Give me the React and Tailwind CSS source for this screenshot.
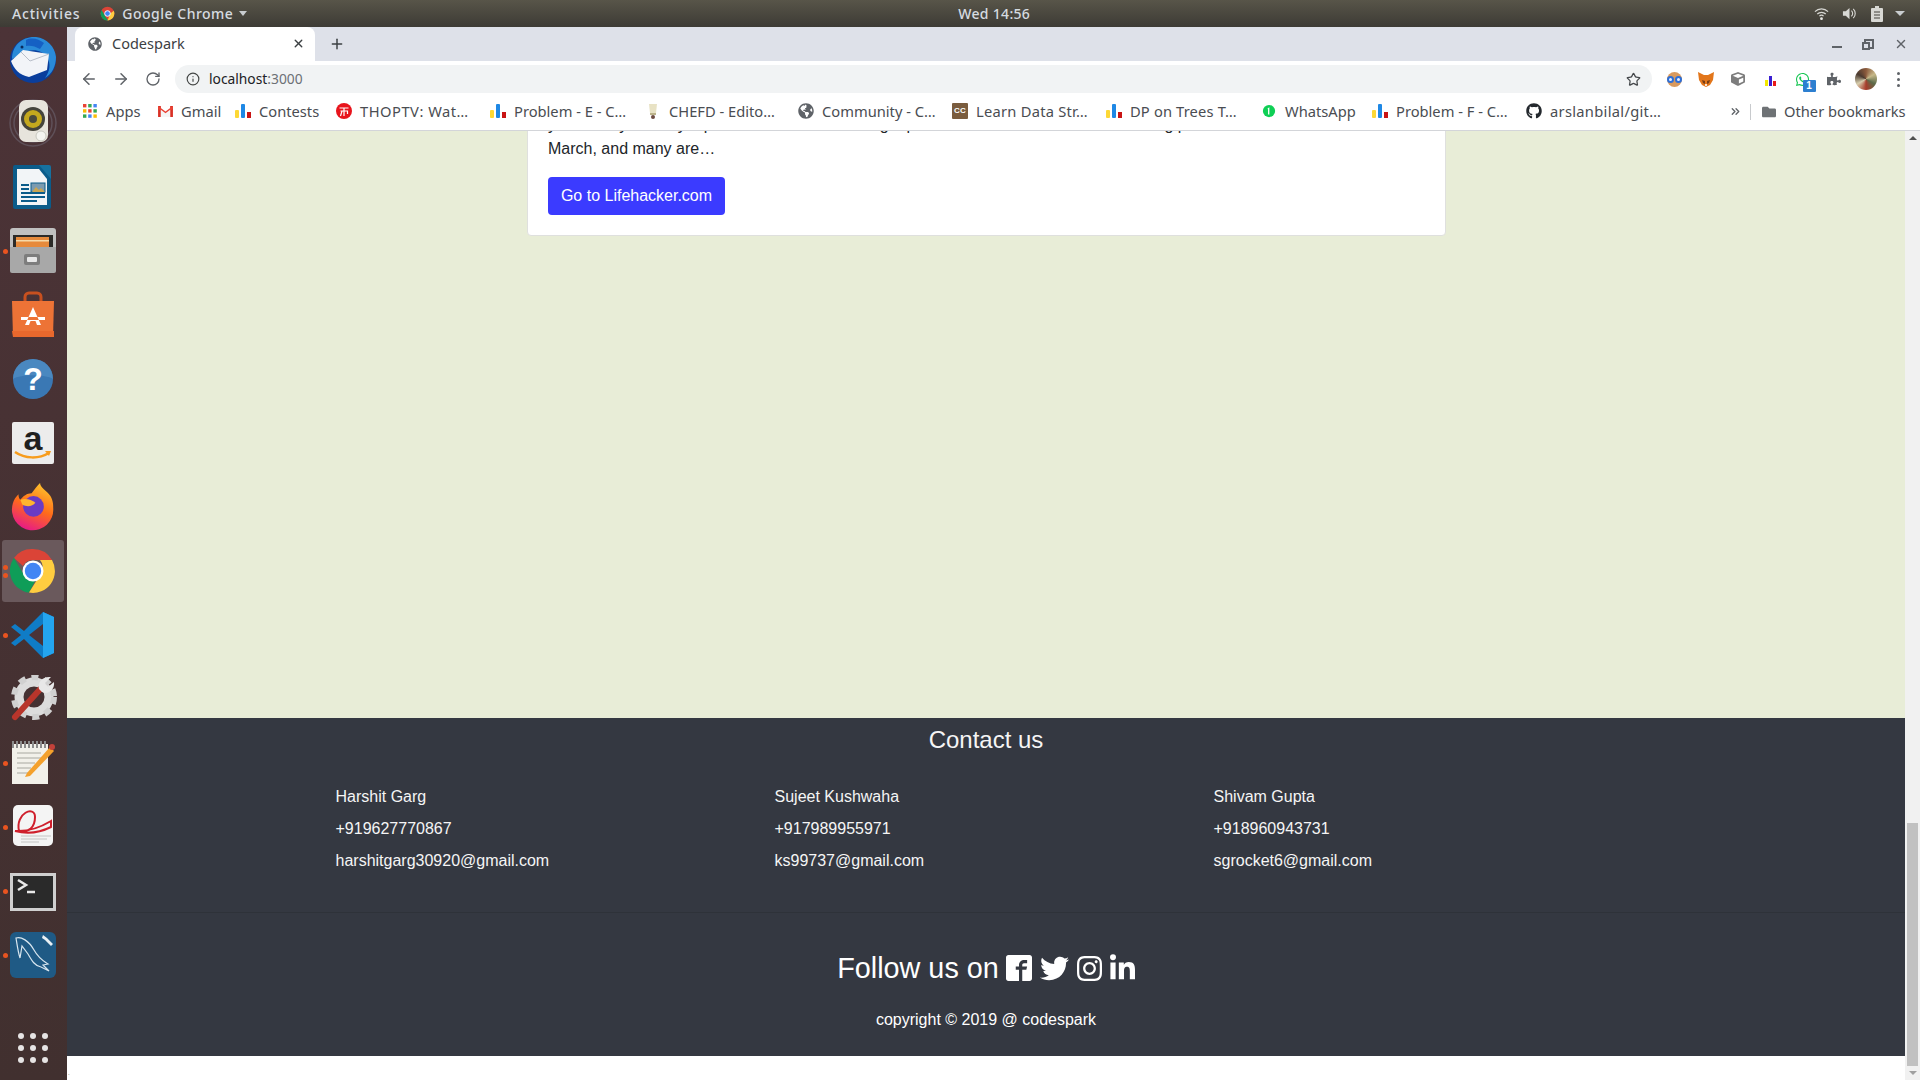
import React from "react";
import { ArrowLeft, ArrowRight, RotateCw, Info, Star, Plus, X, ChevronsRight } from "lucide-react";
import { FaGlobeAmericas, FaGithub, FaFolder, FaPuzzlePiece, FaTwitter, FaInstagram, FaLinkedinIn, FaWhatsapp, FaCube } from "react-icons/fa";
import { ImFacebook2 } from "react-icons/im";

const Bars = ({ className = "w-4 h-4" }) => (
    <svg viewBox="0 0 16 16" className={className}>
        <rect x="0" y="7" width="4" height="8" rx="1" fill="#fdd835" />
        <rect x="6" y="1" width="4" height="14" rx="1" fill="#1e88e5" />
        <rect x="12" y="9" width="4" height="6" fill="#c91414" />
    </svg>
);

const AppsGrid = () => (
    <svg viewBox="0 0 14 14" className="w-[14px] h-[14px]">
        {[
            ["#ea4335", "#34a853", "#4285f4"],
            ["#fbbc05", "#ea4335", "#34a853"],
            ["#34a853", "#4285f4", "#fbbc05"],
        ].map((row, r) =>
            row.map((c, i) => <rect key={`${r}-${i}`} x={i * 5.2} y={r * 5.2} width="3.4" height="3.4" fill={c} />)
        )}
    </svg>
);

const Gmail = () => (
    <svg viewBox="0 0 16 14" className="w-[15px] h-[13px]">
        <path d="M0 1h3v12H0zM13 1h3v12h-3z" fill="#d93025" />
        <path d="M0 1l8 6 8-6v3L8 10 0 4z" fill="#ea4335" />
        <path d="M3 5l5 4 5-4v8H3z" fill="#f5f5f5" />
    </svg>
);

const Thop = () => (
    <svg viewBox="0 0 16 16" className="w-4 h-4">
        <circle cx="8" cy="8" r="8" fill="#e8141c" />
        <path d="M3.5 5h9M8 5v3M4.5 8h7v3M6 8l-1.5 5M8 8v5" stroke="#fff" strokeWidth="1.2" fill="none" />
    </svg>
);

const Chef = () => (
    <svg viewBox="0 0 16 16" className="w-4 h-4">
        <path d="M4 1h8l-1 9H5z" fill="#e8e2c4" />
        <path d="M5 10h6v2H5z" fill="#bcb38a" />
        <circle cx="8" cy="14" r="2" fill="#6d4c41" />
    </svg>
);

const CC = () => (
    <div className="w-4 h-4 bg-[#7a5c3e] rounded-[1px] flex items-center justify-center text-[8px] leading-none font-bold text-white font-['Liberation_Sans']">
        CC
    </div>
);

const Wa = () => (
    <svg viewBox="0 0 16 16" className="w-[14px] h-[14px]">
        <circle cx="8" cy="8" r="7" fill="#0fcf55" />
        <path d="M6.4 5l2-1.2V12H6.9V5.6L6.4 6z" fill="#fff" />
    </svg>
);

const bookmarks = [
    { label: "Apps", icon: <AppsGrid />, w: "w-[75px]" },
    { label: "Gmail", icon: <Gmail />, w: "w-[78px]" },
    { label: "Contests", icon: <Bars />, w: "w-[101px]" },
    { label: "THOPTV: Wat…", icon: <Thop />, w: "w-[154px] tracking-[0.5px]" },
    { label: "Problem - E - C…", icon: <Bars />, w: "w-[155px]" },
    { label: "CHEFD - Edito…", icon: <Chef />, w: "w-[153px]" },
    { label: "Community - C…", icon: <FaGlobeAmericas className="w-4 h-4 text-[#5f6368]" />, w: "w-[154px]" },
    { label: "Learn Data Str…", icon: <CC />, w: "w-[154px] tracking-[0.25px]" },
    { label: "DP on Trees T…", icon: <Bars />, w: "w-[155px] tracking-[0.15px]" },
    { label: "WhatsApp", icon: <Wa />, w: "w-[111px]" },
    { label: "Problem - F - C…", icon: <Bars />, w: "w-[154px]" },
    { label: "arslanbilal/git…", icon: <FaGithub className="w-4 h-4 text-[#24292e]" />, w: "w-[150px] tracking-[0.3px]" },
];

const Thunderbird = () => (
    <svg viewBox="0 0 48 48" className="w-12 h-12">
        <circle cx="24" cy="25" r="23" fill="#0a3e9c" />
        <path d="M3 24C3 10 14 1 27 2c11 1 19 10 20 20 0 9-4 17-11 21 5-7 6-14 2-21-4-6-12-8-19-6z" fill="#2a8ad8" />
        <path d="M17 5c6-3 13-1 18 3l-4 6c-5-3-10-4-14-3z" fill="#1560c4" />
        <path d="M2 26l12-11 26 4-2 16-18 7C10 40 5 34 2 26z" fill="#f2f4f8" />
        <path d="M12 17l9 9 19-7" fill="none" stroke="#b8bec9" strokeWidth="1" />
        <circle cx="13" cy="12" r="1.5" fill="#0a2a5c" />
    </svg>
);

const Speaker = () => (
    <svg viewBox="0 0 48 48" className="w-12 h-12">
        <circle cx="24" cy="24" r="23" fill="none" stroke="#6d6470" strokeWidth="1.5" opacity=".6" />
        <circle cx="24" cy="24" r="19" fill="none" stroke="#6d6470" strokeWidth="1.5" opacity=".6" />
        <rect x="10" y="1" width="29" height="42" rx="7" fill="#e7e4dc" />
        <circle cx="24" cy="20" r="12" fill="#45443c" />
        <circle cx="24" cy="20" r="9" fill="#c4a81e" />
        <circle cx="24" cy="20" r="4" fill="#4a4a3c" />
        <circle cx="32" cy="37" r="5" fill="#f4f4f0" stroke="#c8c8c0" />
    </svg>
);

const Writer = () => (
    <svg viewBox="0 0 48 48" className="w-12 h-12">
        <path d="M6 2h28l8 8v34a2 2 0 0 1-2 2H6a2 2 0 0 1-2-2V4a2 2 0 0 1 2-2z" fill="#0b5c8a" />
        <path d="M30 2h10a2 2 0 0 1 2 2v12z" fill="#16719f" />
        <path d="M8 6h22l8 10v26H8z" fill="#f2f5f7" />
        <rect x="22" y="20" width="14" height="9" fill="#7b9bb0" stroke="#0b5c8a" />
        <path d="M23 29l4-5 3 3 2-2 4 4z" fill="#c9a552" />
        <path d="M12 22h8M12 26h8M12 30h24M12 34h24M12 38h16" stroke="#0b5c8a" strokeWidth="2" />
    </svg>
);

const Files = () => (
    <svg viewBox="0 0 48 48" className="w-12 h-12">
        <rect x="1" y="1" width="46" height="44" rx="3" fill="#c0c0c0" />
        <rect x="4" y="8" width="40" height="15" fill="#2c2a28" />
        <rect x="7" y="10" width="33" height="10" fill="#e68a3c" />
        <rect x="7" y="13" width="33" height="1.5" fill="#f6d9a8" />
        <path d="M1 20h46v24a2 2 0 0 1-2 2H3a2 2 0 0 1-2-2z" fill="#a8a8a8" />
        <rect x="15" y="27" width="16" height="11" rx="2" fill="#7d7d7d" />
        <rect x="18" y="30" width="10" height="5" rx="1" fill="#e8e8e8" />
    </svg>
);

const Store = () => (
    <svg viewBox="0 0 48 48" className="w-12 h-12">
        <path d="M16 14V6a4 4 0 0 1 4-4h8a4 4 0 0 1 4 4v8" fill="none" stroke="#c8501f" strokeWidth="3" />
        <path d="M3 10h42l-1 36H4z" fill="#ed7336" />
        <path d="M3 40h42v6H4z" fill="#e8682d" />
        <path d="M24 16l-8 18h4l1.5-4h5l1.5 4h4zM12 26h24v3H12z" fill="#fff" />
    </svg>
);

const Help = () => (
    <svg viewBox="0 0 48 48" className="w-12 h-12">
        <circle cx="24" cy="24" r="20" fill="#3a78b4" />
        <path d="M4 24a20 20 0 0 1 40 0c-8-5-32-5-40 0z" fill="#5592c8" opacity=".6" />
        <text x="24" y="35" textAnchor="middle" fontSize="32" fontWeight="700" fill="#fff" fontFamily="Liberation Sans">?</text>
    </svg>
);

const Amazon = () => (
    <svg viewBox="0 0 48 48" className="w-12 h-12">
        <rect x="3" y="3" width="42" height="42" rx="2" fill="#ececec" />
        <text x="24" y="31" textAnchor="middle" fontSize="34" fontWeight="700" fill="#1f1f1f" fontFamily="Liberation Sans">a</text>
        <path d="M6 33c10 7 24 7 34 1" fill="none" stroke="#f79c1d" strokeWidth="2.5" />
        <path d="M36 32l6 0-2 5z" fill="#f79c1d" />
    </svg>
);

const Firefox = () => (
    <svg viewBox="0 0 48 48" className="w-12 h-12">
        <defs>
            <linearGradient id="ff" x1="0.7" y1="0" x2="0.3" y2="1">
                <stop offset="0" stopColor="#ffc32c" />
                <stop offset="0.5" stopColor="#ff6b1a" />
                <stop offset="1" stopColor="#e6168c" />
            </linearGradient>
        </defs>
        <g transform="translate(1 -1) scale(.94)">
            <path d="M32 1c0 5 7 8 11 14 3 5 3 10 3 13a22 22 0 1 1-43-5c1-4 3-7 6-10 0 3 1 5 2 6 3-4 7-7 12-7 3-4 6-8 9-11z" fill="url(#ff)" />
            <circle cx="25" cy="26" r="11" fill="#6a3bc4" />
            <path d="M11 19c6-2 12 0 16 3-3 4-9 5-14 2z" fill="#ffb52e" />
        </g>
    </svg>
);

const Chrome = () => (
    <svg viewBox="0 0 48 48" className="w-12 h-12">
        <path d="M24 2a22 22 0 0 1 19 11H24a11 11 0 0 0-10 6L5 11A22 22 0 0 1 24 2z" fill="#db4437" />
        <path d="M5 11l10 17a11 11 0 0 0 11 6l-6 11.6A22 22 0 0 1 5 11z" fill="#0f9d58" />
        <path d="M43 13a22 22 0 0 1-23 32.6L31 28a11 11 0 0 0 0-15z" fill="#ffcd40" />
        <circle cx="24" cy="24" r="10.5" fill="#fff" />
        <circle cx="24" cy="24" r="8.2" fill="#4285f4" />
    </svg>
);

const VSCode = () => (
    <svg viewBox="0 0 48 48" className="w-12 h-12">
        <path d="M34 1l11 5v36l-11 5-19-19-9 7-4-3 10-8L2 16l4-3 9 7z" fill="#0f7cc6" />
        <path d="M34 1l11 5v36l-11 5z" fill="#24a5ef" />
        <path d="M34 13L20 24l14 11z" fill="#4a3338" />
    </svg>
);

const Settings = () => (
    <svg viewBox="0 0 48 48" className="w-12 h-12">
        <g transform="translate(0 -2)">
            <circle cx="25" cy="24" r="15" fill="none" stroke="#dcdcdc" strokeWidth="9" />
            <circle cx="25" cy="24" r="20" fill="none" stroke="#d0d0d0" strokeWidth="6" strokeDasharray="7 6" />
            <path d="M6 44L34 13" stroke="#b8352b" strokeWidth="6" strokeLinecap="round" />
            <path d="M30 16c-2-7 4-13 12-12l-6 6 3 4 6-5c1 8-6 13-12 10z" fill="#e8e8e8" />
        </g>
    </svg>
);

const Notes = () => (
    <svg viewBox="0 0 48 48" className="w-12 h-12">
        <rect x="3" y="5" width="36" height="40" fill="#f2f1ea" />
        <path d="M4 2v7M8 2v7M12 2v7M16 2v7M20 2v7M24 2v7M28 2v7M32 2v7M36 2v7" stroke="#8c8c8c" strokeWidth="2" />
        <path d="M8 14h24M8 19h24M8 24h18M8 29h14M8 34h12" stroke="#a8a8a0" strokeWidth="1" />
        <path d="M18 34L41 8l4 4-24 25-5 1z" fill="#f4a12c" />
        <circle cx="43" cy="8" r="3" fill="#c2413a" />
    </svg>
);

const Evince = () => (
    <svg viewBox="0 0 48 48" className="w-12 h-12">
        <rect x="4" y="2" width="40" height="41" rx="5" fill="#f4f4f4" />
        <path d="M10 28c-4-18 16-26 16-14 0 10-6 16-16 14zM6 28c14 1 26-4 36-10v6c-12 6-24 7-36 4z" fill="none" stroke="#cf1f2c" strokeWidth="2" />
        <path d="M12 33h30M12 36h26M12 39h18" stroke="#c4c4c4" strokeWidth="1" />
    </svg>
);

const Terminal = () => (
    <svg viewBox="0 0 48 48" className="w-12 h-12">
        <rect x="1" y="6" width="46" height="38" fill="#cfcfcf" />
        <rect x="4" y="9" width="40" height="32" fill="#2a2a2a" />
        <path d="M9 13l8 5-8 5" stroke="#e8e8e8" strokeWidth="2.5" fill="none" />
        <path d="M18 25h8" stroke="#e8e8e8" strokeWidth="2.5" />
    </svg>
);

const Workbench = () => (
    <svg viewBox="0 0 48 48" className="w-12 h-12">
        <rect x="1" y="1" width="46" height="46" rx="6" fill="#1f5a85" />
        <path d="M7 7c5-2 13 3 18 12s11 12 14 14l-5 1 6 6-8-4c-6-1-9-6-13-13l-6-8-2 12c-2-6-3-14-4-20z" fill="none" stroke="#d8e6ef" strokeWidth="1.2" />
        <path d="M34 4l4 3 6 6-2 2-6-6-3-2z" fill="#e8f0f5" />
    </svg>
);

const dock = [
    { icon: <Thunderbird /> },
    { icon: <Speaker /> },
    { icon: <Writer /> },
    { icon: <Files />, dots: 1 },
    { icon: <Store /> },
    { icon: <Help /> },
    { icon: <Amazon /> },
    { icon: <Firefox /> },
    { icon: <Chrome />, dots: 2, active: true },
    { icon: <VSCode />, dots: 1 },
    { icon: <Settings /> },
    { icon: <Notes />, dots: 1 },
    { icon: <Evince />, dots: 1 },
    { icon: <Terminal />, dots: 1 },
    { icon: <Workbench />, dots: 1 },
];

const people = [
    ["Harshit Garg", "+919627770867", "harshitgarg30920@gmail.com"],
    ["Sujeet Kushwaha", "+917989955971", "ks99737@gmail.com"],
    ["Shivam Gupta", "+918960943731", "sgrocket6@gmail.com"],
];

function TopBar() {
    return (
        <div className="h-[27px] shrink-0 flex items-center justify-between pl-3 pr-[15px] bg-gradient-to-b from-[#585549] to-[#3d3b35] text-[#d6dbe0] font-['Noto_Sans'] text-[14px] font-medium">
            <div className="flex items-center">
                <span className="tracking-[0.8px]">Activities</span>
                <svg viewBox="0 0 48 48" className="w-[15px] h-[15px] ml-[20px]">
                    <circle cx="24" cy="24" r="22" fill="#db4437" />
                    <path d="M5 13l13 22 8 11A22 22 0 0 1 5 13z" fill="#0f9d58" />
                    <path d="M44 15a22 22 0 0 1-20 31l9-22z" fill="#ffcd40" />
                    <circle cx="24" cy="24" r="9" fill="#4285f4" stroke="#fff" strokeWidth="3" />
                </svg>
                <span className="ml-[7px] tracking-[0.5px]">Google Chrome</span>
                <div className="ml-[6px] w-0 h-0 border-x-[4px] border-x-transparent border-t-[5px] border-t-[#c9cdd0]" />
            </div>
            <span className="tracking-[0.3px] mr-[73px]">Wed 14:56</span>
            <div className="flex items-center gap-[14px] text-[#d8d8d4]">
                <svg viewBox="0 0 16 16" className="w-[15px] h-[15px] mr-[-1px]">
                    <path d="M1 6a10 10 0 0 1 14 0M3.5 8.5a6.5 6.5 0 0 1 9 0M5.8 10.8a3.2 3.2 0 0 1 4.4 0" stroke="#d8d8d4" strokeWidth="1.3" fill="none" />
                    <circle cx="8" cy="13.5" r="1.5" fill="#e8e8e4" />
                </svg>
                <svg viewBox="0 0 16 16" className="w-[15px] h-[15px]">
                    <path d="M1 5.5h3L8 2v12l-4-3.5H1z" fill="#d8d8d4" />
                    <path d="M10 5a4 4 0 0 1 0 6M12 3a7 7 0 0 1 0 10" stroke="#d8d8d4" strokeWidth="1.2" fill="none" />
                </svg>
                <svg viewBox="0 0 12 16" className="w-[12px] h-[16px]">
                    <path d="M4 0h4v2h3a1 1 0 0 1 1 1v12a1 1 0 0 1-1 1H1a1 1 0 0 1-1-1V3a1 1 0 0 1 1-1h3z" fill="#d8d8d4" />
                    <path d="M3 6h6M3 9h6M3 12h6" stroke="#45433c" strokeWidth="1" />
                </svg>
                <div className="ml-[-2px] w-0 h-0 border-x-[5px] border-x-transparent border-t-[5px] border-t-[#c9cdd0]" />
            </div>
        </div>
    );
}

function Dock() {
    return (
        <div className="w-[67px] shrink-0 flex flex-col bg-gradient-to-b from-[#4c3337] to-[#41302f]">
            {dock.map((d, i) => (
                <div key={i} className="relative h-16 flex items-center justify-center pr-[1px]">
                    {d.active && <div className="absolute left-[2px] right-[3px] top-[1px] bottom-[1px] rounded-[3px] bg-[#6a595c]" />}
                    <div className="relative">{d.icon}</div>
                    {d.dots > 0 && (
                        <div className="absolute left-[3px] top-0 bottom-0 flex flex-col justify-center gap-[3px]">
                            {Array.from({ length: d.dots }).map((_, k) => (
                                <div key={k} className="w-[5px] h-[5px] rounded-full bg-[#e95420]" />
                            ))}
                        </div>
                    )}
                </div>
            ))}
            <div className="mt-auto mb-[17px] mx-auto grid grid-cols-3 gap-x-[6px] gap-y-[6px] pr-[1px]">
                {Array.from({ length: 9 }).map((_, i) => (
                    <div key={i} className="w-[6px] h-[6px] rounded-full bg-[#e6e4e4]" />
                ))}
            </div>
        </div>
    );
}

function ChromeBar() {
    return (
        <div className="shrink-0 font-['Noto_Sans'] text-[#3c4043]">
            <div className="h-[34px] bg-[#dee1e9] flex items-end pl-[8px]">
                <div className="w-[240px] h-[34px] bg-white rounded-t-[8px] flex items-center pl-[13px] pr-[10px] pb-[1px] text-[14.5px]">
                    <FaGlobeAmericas className="w-[14px] h-[14px] text-[#5f6368]" />
                    <span className="ml-[10px]">Codespark</span>
                    <X className="ml-auto w-[13px] h-[13px] text-[#3c4043]" strokeWidth={2.5} />
                </div>
                <div className="h-[34px] ml-[14px] flex items-center">
                    <Plus className="w-[16px] h-[16px] text-[#3c4043]" strokeWidth={2.2} />
                </div>
                <div className="ml-auto h-[34px] flex items-center pr-[3px] text-[#4b4f55]">
                    <div className="w-[32px] flex justify-center">
                        <div className="w-[10px] h-[2px] bg-[#5f6368] mt-[6px]" />
                    </div>
                    <div className="w-[32px] flex justify-center">
                        <div className="relative w-[10px] h-[10px] border-2 border-[#5f6368]">
                            <div className="absolute left-[-4px] top-[1px] w-[8px] h-[8px] border-2 border-[#5f6368] bg-[#dee1e9]" />
                        </div>
                    </div>
                    <div className="w-[32px] flex justify-center">
                        <X className="w-[14px] h-[14px] text-[#5f6368]" strokeWidth={2.5} />
                    </div>
                </div>
            </div>
            <div className="h-[36px] bg-white flex items-center text-[#5f6368]">
                <div className="w-[108px] pl-[13px] flex items-center gap-[14px]">
                    <ArrowLeft className="w-[18px] h-[18px]" />
                    <ArrowRight className="w-[18px] h-[18px]" />
                    <RotateCw className="w-[16px] h-[16px] ml-[1px]" />
                </div>
                <div className="w-[1477px] h-[28px] rounded-full bg-[#f1f3f4] flex items-center pl-[11px] pr-[11px] text-[13.8px]">
                    <Info className="w-[14px] h-[14px] text-[#444746]" />
                    <span className="ml-[9px] text-[#202124]">localhost</span>
                    <span className="text-[#6c7074]">:3000</span>
                    <Star className="ml-auto w-[15px] h-[15px] text-[#44474a]" />
                </div>
                <div className="flex-1 flex items-center pl-[6px]">
                    <div className="w-8 flex justify-center">
                        <div className="relative w-[15px] h-[15px] rounded-full bg-[#d99a5e]">
                            <div className="absolute left-0 top-[4px] w-[7px] h-[7px] rounded-full bg-[#e8f0ff] border-2 border-[#2d6fd8]" />
                            <div className="absolute right-0 top-[4px] w-[7px] h-[7px] rounded-full bg-[#e8f0ff] border-2 border-[#2d6fd8]" />
                        </div>
                    </div>
                    <div className="w-8 flex justify-center">
                        <svg viewBox="0 0 16 16" className="w-4 h-4">
                            <path d="M0 1l6 3h4l6-3-1 8-3 5-4 2-4-2-3-5z" fill="#e2761b" />
                            <path d="M4 9l3 1v3l-2-1zM12 9l-3 1v3l2-1z" fill="#763d16" />
                            <path d="M7 13h2v2H7z" fill="#f5e6d8" />
                        </svg>
                    </div>
                    <div className="w-8 flex justify-center">
                        <FaCube className="w-[14px] h-[14px] text-[#7d7d7d]" />
                    </div>
                    <div className="w-8 flex justify-center items-end gap-[1px] h-[14px]">
                        <div className="w-[3px] h-[6px] bg-[#f4e900]" />
                        <div className="w-[3px] h-[10px] bg-[#3a1fd1]" />
                        <div className="w-[3px] h-[5px] bg-[#e81a1a]" />
                    </div>
                    <div className="w-8 flex justify-center">
                        <div className="relative">
                            <FaWhatsapp className="w-[15px] h-[15px] text-[#17c653]" />
                            <div className="absolute left-[8px] top-[8px] w-[13px] h-[12px] bg-[#2d7fd0] rounded-[1px] text-[10px] leading-[12px] text-center font-bold text-white font-['Liberation_Sans']">
                                1
                            </div>
                        </div>
                    </div>
                    <div className="w-8 flex justify-center">
                        <FaPuzzlePiece className="w-[14px] h-[14px] text-[#5f6368]" />
                    </div>
                    <div className="w-8 flex justify-center">
                        <div className="w-[22px] h-[22px] rounded-full bg-[conic-gradient(#8b5a3c,#c7b98a,#5c6b4a,#a83b2a,#d8cfae,#4a3a30,#8b5a3c)]" />
                    </div>
                    <div className="w-8 flex justify-center flex-col items-center gap-[3px]">
                        <div className="w-[3px] h-[3px] rounded-full bg-[#5f6368]" />
                        <div className="w-[3px] h-[3px] rounded-full bg-[#5f6368]" />
                        <div className="w-[3px] h-[3px] rounded-full bg-[#5f6368]" />
                    </div>
                </div>
            </div>
            <div className="h-[34px] bg-white border-b border-[#d3d5d9] flex items-center pl-[15px] pb-[4px] text-[14.7px] text-[#4a4d52]">
                {bookmarks.map((b) => (
                    <div key={b.label} className={`${b.w} shrink-0 flex items-center gap-[8px] whitespace-nowrap`}>
                        <div className="w-[16px] flex justify-center">{b.icon}</div>
                        <span>{b.label}</span>
                    </div>
                ))}
                <ChevronsRight className="ml-[53px] w-[13px] h-[13px] text-[#5f6368]" strokeWidth={2.5} />
                <div className="ml-[8px] w-[1px] h-[16px] bg-[#c8cacd]" />
                <FaFolder className="ml-[11px] w-[14px] h-[14px] text-[#6e7275]" />
                <span className="ml-[8px] whitespace-nowrap">Other bookmarks</span>
            </div>
        </div>
    );
}

function Scrollbar() {
    return (
        <div className="w-[15px] shrink-0 bg-[#f1f1f1] flex flex-col items-center">
            <div className="mt-[5px] w-0 h-0 border-x-[4px] border-x-transparent border-b-[4px] border-b-[#505050]" />
            <div className="mt-auto w-[11px] h-[243px] bg-[#c1c1c1]" />
            <div className="mt-[5px] mb-[5px] w-0 h-0 border-x-[4px] border-x-transparent border-t-[4px] border-t-[#a0a0a0]" />
        </div>
    );
}

function Page() {
    return (
        <div className="flex-1 min-h-0 flex font-['Liberation_Sans'] text-[16px] text-[#212529]">
            <div className="flex-1 min-w-0 flex flex-col bg-white">
                <div className="flex-1 min-h-0 overflow-hidden bg-[#e8edd7]">
                    <div className="w-[919px] mt-[-39px] ml-[460px] bg-white border border-[#dfe0de] rounded-[4px] p-5">
                        <p className="leading-6 whitespace-nowrap">your hobby actually a part of the old world and got put on hold when the outbreak in long past</p>
                        <p className="leading-6 mb-4">March, and many are…</p>
                        <button className="h-[38px] w-[177px] rounded-[4px] bg-[#3b3bff] text-white text-center">Go to Lifehacker.com</button>
                    </div>
                </div>
                <footer className="h-[338px] shrink-0 bg-[#343841] text-[#f5f5f5] flex flex-col">
                    <h4 className="text-[24px] leading-[29px] text-center mt-[7px]">Contact us</h4>
                    <div className="w-[1317px] mx-auto grid grid-cols-3 mt-[31px] mb-[39px]">
                        {people.map((p) => (
                            <div key={p[0]} className="pl-[8px] flex flex-col gap-2">
                                {p.map((line) => (
                                    <div key={line} className="leading-6">{line}</div>
                                ))}
                            </div>
                        ))}
                    </div>
                    <div className="border-t border-[#2e3239] flex-1 flex flex-col items-center text-white">
                        <div className="flex items-center gap-2 mt-[36px] h-[38px]">
                            <span className="text-[28.8px] leading-[38px] mr-[-1px]">Follow us on</span>
                            <ImFacebook2 className="w-[26px] h-[26px]" />
                            <FaTwitter className="w-[29px] h-[29px]" />
                            <FaInstagram className="w-[25px] h-[29px]" />
                            <FaLinkedinIn className="w-[25px] h-[29px]" />
                        </div>
                        <div className="mt-[21px] leading-6">copyright © 2019 @ codespark</div>
                    </div>
                </footer>
                <div className="h-[24px] shrink-0 bg-white pl-[1px] pt-[14px] text-[6px] leading-none">.</div>
            </div>
            <Scrollbar />
        </div>
    );
}

export default function App() {
    return (
        <div className="w-[1920px] h-[1080px] overflow-hidden flex flex-col">
            <TopBar />
            <div className="flex-1 min-h-0 flex">
                <Dock />
                <div className="flex-1 min-w-0 flex flex-col">
                    <ChromeBar />
                    <Page />
                </div>
            </div>
        </div>
    );
}
